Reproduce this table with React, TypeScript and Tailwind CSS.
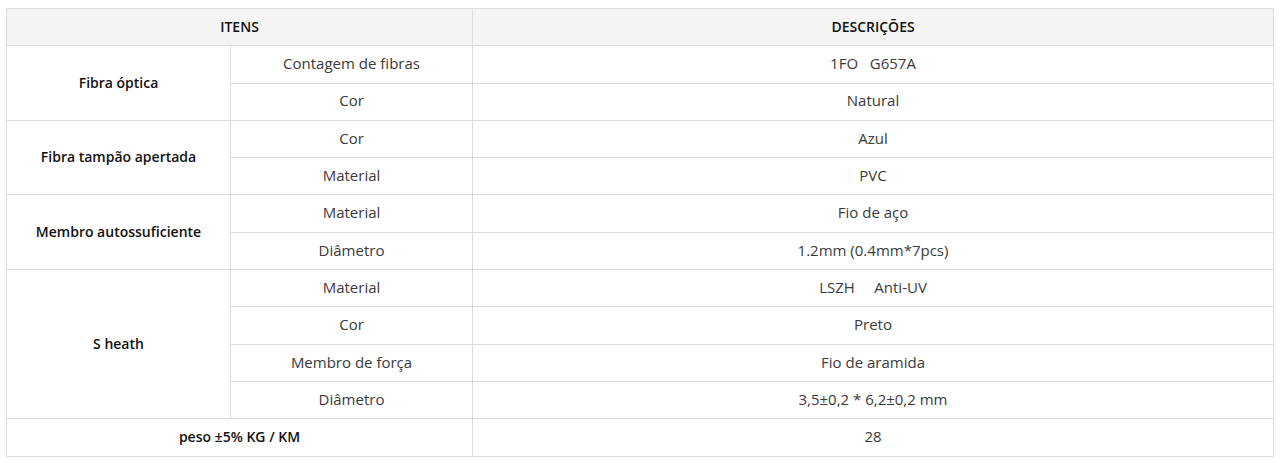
import React from 'react';

const groups = [
  {
    item: 'Fibra óptica',
    rows: [
      ['Contagem de fibras', '1FO\u00a0\u00a0\u00a0G657A'],
      ['Cor', 'Natural'],
    ],
  },
  {
    item: 'Fibra tampão apertada',
    rows: [
      ['Cor', 'Azul'],
      ['Material', 'PVC'],
    ],
  },
  {
    item: 'Membro autossuficiente',
    rows: [
      ['Material', 'Fio de aço'],
      ['Diâmetro', '1.2mm\u00a0(0.4mm*7pcs)'],
    ],
  },
  {
    item: 'S heath',
    rows: [
      ['Material', 'LSZH\u00a0\u00a0\u00a0\u00a0\u00a0Anti-UV'],
      ['Cor', 'Preto'],
      ['Membro de força', 'Fio de aramida'],
      ['Diâmetro', '3,5±0,2 * 6,2±0,2 mm'],
    ],
  },
];

const cell = 'border border-[#dddddd] text-center align-middle h-[37.3px] p-0 pb-[2px]';

const App: React.FC = () => {
  return (
    <div className="bg-white min-h-screen pt-2 px-[6px]" style={{ fontFamily: '"Open Sans", "Noto Sans", sans-serif' }}>
      <table className="w-[1268px] border-collapse text-[15px] text-[#3a3a3a] table-fixed">
        <colgroup>
          <col className="w-[224px]" />
          <col className="w-[242px]" />
          <col />
        </colgroup>
        <thead>
          <tr className="bg-[#f4f4f4]">
            <th colSpan={2} className={`${cell} font-semibold text-[14px] text-[#111111]`}>ITENS</th>
            <th className={`${cell} font-semibold text-[14px] text-[#111111]`}>DESCRIÇÕES</th>
          </tr>
        </thead>
        <tbody>
          {groups.map((g) =>
            g.rows.map((r, i) => (
              <tr key={g.item + i}>
                {i === 0 && (
                  <td rowSpan={g.rows.length} className={`${cell} font-semibold text-[14px] text-[#111111]`}>
                    {g.item}
                  </td>
                )}
                <td className={cell}>{r[0]}</td>
                <td className={cell}>{r[1]}</td>
              </tr>
            ))
          )}
          <tr>
            <td colSpan={2} className={`${cell} font-semibold text-[14px] text-[#111111]`}>peso ±5% KG / KM</td>
            <td className={cell}>28</td>
          </tr>
        </tbody>
      </table>
    </div>
  );
};

export default App;
